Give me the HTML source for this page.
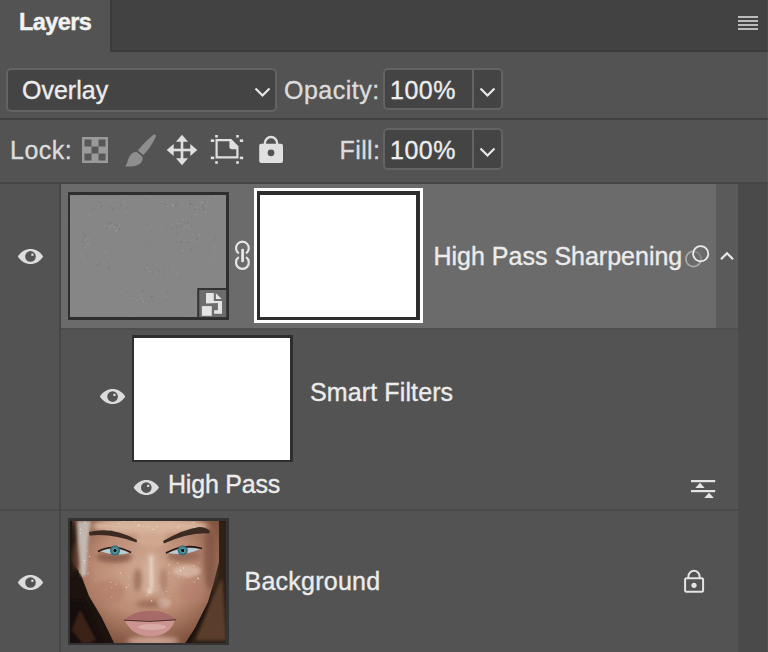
<!DOCTYPE html>
<html><head><meta charset="utf-8">
<style>
html,body{margin:0;padding:0;}
body{width:768px;height:652px;background:#535353;position:relative;overflow:hidden;font-family:"Liberation Sans",sans-serif;color:#ececec;}
.a{position:absolute;}
.t{position:absolute;font-size:25px;line-height:25px;white-space:nowrap;-webkit-text-stroke:0.35px currentColor;}
svg{position:absolute;left:0;top:0;}
</style></head><body>
<!-- header -->
<div class="a" style="left:110px;top:0;width:658px;height:52px;background:#424242;"></div>
<div class="a" style="left:110px;top:0;width:2px;height:52px;background:#3c3c3c;"></div>
<div class="a" style="left:110px;top:50px;width:658px;height:2px;background:#3c3c3c;"></div>
<div class="t" style="left:19px;top:10.8px;font-size:23.5px;line-height:23.5px;font-weight:bold;color:#f2f2f2;letter-spacing:-0.6px;-webkit-text-stroke:0.4px #f2f2f2;">Layers</div>

<!-- row 2: blend mode -->
<div class="a" style="left:6px;top:68px;width:267px;height:40px;border:2px solid #636363;border-radius:5px;background:#444444;"></div>
<div class="t" style="left:22px;top:78px;">Overlay</div>
<div class="t" style="left:284px;top:78px;color:#dcdcdc;letter-spacing:0.5px;">Opacity:</div>
<div class="a" style="left:383px;top:68px;width:115.5px;height:38px;border:2px solid #636363;border-radius:5px;background:#444444;"></div>
<div class="a" style="left:472px;top:70px;width:2px;height:38px;background:#636363;"></div>
<div class="t" style="left:390px;top:77.5px;letter-spacing:0.5px;">100%</div>
<div class="a" style="left:0;top:118px;width:768px;height:2px;background:#404040;"></div>

<!-- row 3: lock -->
<div class="t" style="left:10px;top:138px;color:#dcdcdc;letter-spacing:0.5px;">Lock:</div>
<div class="t" style="left:339.5px;top:138px;color:#dcdcdc;letter-spacing:0.4px;">Fill:</div>
<div class="a" style="left:383px;top:128px;width:115.5px;height:38px;border:2px solid #636363;border-radius:5px;background:#444444;"></div>
<div class="a" style="left:472px;top:130px;width:2px;height:38px;background:#636363;"></div>
<div class="t" style="left:390px;top:138px;letter-spacing:0.5px;">100%</div>
<div class="a" style="left:0;top:182px;width:768px;height:2px;background:#464646;"></div>

<!-- layer area -->
<div class="a" style="left:738px;top:184px;width:30px;height:468px;background:#4a4a4a;"></div>
<div class="a" style="left:59px;top:184px;width:2px;height:468px;background:#464646;"></div>
<!-- selected layer -->
<div class="a" style="left:61px;top:184px;width:655px;height:144px;background:#6b6b6b;"></div>
<div class="a" style="left:716px;top:184px;width:22px;height:144px;background:#5a5a5a;"></div>
<div class="a" style="left:61px;top:328px;width:677px;height:2px;background:#4e4e4e;"></div>
<!-- thumb 1 -->
<div class="a" style="left:68px;top:192px;width:156px;height:122px;border:3px solid #2e2e2e;border-left-width:2px;background:#868686;overflow:hidden;">
<svg width="156" height="122" viewBox="70 195 156 122" style="position:absolute;left:0;top:0;">
<g fill="none" stroke="#929292" stroke-width="0.8" opacity="0.35">
<path d="M81,250 L89,271 L102,293 L115,317"/><path d="M219,237 L213,260 L208,277 L195,303 L184,317"/>
<circle cx="115" cy="225.6" r="4.5"/><circle cx="182.7" cy="225.4" r="4.5"/>
</g>
<circle cx="113.3" cy="210.0" r="0.77" fill="#6e6e6e" opacity="0.54"/>
<circle cx="96.3" cy="205.4" r="0.50" fill="#747474" opacity="0.44"/>
<circle cx="126.9" cy="206.9" r="0.56" fill="#747474" opacity="0.69"/>
<circle cx="112.9" cy="208.4" r="0.70" fill="#747474" opacity="0.62"/>
<circle cx="132.5" cy="208.6" r="0.52" fill="#a8a8a8" opacity="0.36"/>
<circle cx="121.9" cy="205.0" r="0.69" fill="#747474" opacity="0.72"/>
<circle cx="93.3" cy="209.6" r="0.79" fill="#747474" opacity="0.40"/>
<circle cx="109.6" cy="207.5" r="0.49" fill="#747474" opacity="0.74"/>
<circle cx="94.9" cy="208.3" r="0.57" fill="#6e6e6e" opacity="0.68"/>
<circle cx="97.4" cy="205.7" r="0.63" fill="#747474" opacity="0.71"/>
<circle cx="99.4" cy="202.0" r="0.80" fill="#6e6e6e" opacity="0.62"/>
<circle cx="125.6" cy="211.1" r="0.69" fill="#a8a8a8" opacity="0.43"/>
<circle cx="120.5" cy="204.3" r="0.45" fill="#6e6e6e" opacity="0.54"/>
<circle cx="102.2" cy="204.9" r="0.72" fill="#6e6e6e" opacity="0.51"/>
<circle cx="118.4" cy="208.6" r="0.75" fill="#747474" opacity="0.37"/>
<circle cx="109.0" cy="206.5" r="0.62" fill="#6e6e6e" opacity="0.72"/>
<circle cx="110.2" cy="208.7" r="0.52" fill="#a8a8a8" opacity="0.38"/>
<circle cx="109.3" cy="206.6" r="0.79" fill="#a0a0a0" opacity="0.47"/>
<circle cx="110.3" cy="210.7" r="0.53" fill="#6e6e6e" opacity="0.73"/>
<circle cx="122.2" cy="205.6" r="0.75" fill="#747474" opacity="0.50"/>
<circle cx="125.4" cy="204.3" r="0.65" fill="#a8a8a8" opacity="0.73"/>
<circle cx="98.0" cy="206.9" r="0.77" fill="#a0a0a0" opacity="0.52"/>
<circle cx="111.4" cy="209.0" r="0.40" fill="#6e6e6e" opacity="0.52"/>
<circle cx="109.7" cy="206.8" r="0.42" fill="#a0a0a0" opacity="0.60"/>
<circle cx="92.5" cy="207.8" r="0.64" fill="#6e6e6e" opacity="0.46"/>
<circle cx="94.4" cy="207.2" r="0.79" fill="#a8a8a8" opacity="0.45"/>
<circle cx="95.0" cy="207.9" r="0.47" fill="#6e6e6e" opacity="0.42"/>
<circle cx="113.3" cy="202.4" r="0.52" fill="#6e6e6e" opacity="0.50"/>
<circle cx="112.4" cy="206.4" r="0.52" fill="#a0a0a0" opacity="0.44"/>
<circle cx="115.2" cy="205.3" r="0.67" fill="#a0a0a0" opacity="0.61"/>
<circle cx="126.7" cy="208.9" r="0.67" fill="#6e6e6e" opacity="0.44"/>
<circle cx="124.3" cy="201.3" r="0.53" fill="#a8a8a8" opacity="0.61"/>
<circle cx="122.8" cy="205.3" r="0.71" fill="#a0a0a0" opacity="0.36"/>
<circle cx="123.1" cy="206.4" r="0.75" fill="#a0a0a0" opacity="0.49"/>
<circle cx="114.6" cy="206.1" r="0.64" fill="#6e6e6e" opacity="0.52"/>
<circle cx="86.5" cy="206.5" r="0.54" fill="#747474" opacity="0.52"/>
<circle cx="100.1" cy="208.2" r="0.46" fill="#747474" opacity="0.35"/>
<circle cx="137.5" cy="205.3" r="0.62" fill="#747474" opacity="0.74"/>
<circle cx="111.3" cy="206.4" r="0.73" fill="#747474" opacity="0.62"/>
<circle cx="101.2" cy="206.8" r="0.76" fill="#6e6e6e" opacity="0.69"/>
<circle cx="208.0" cy="199.0" r="0.72" fill="#a8a8a8" opacity="0.37"/>
<circle cx="202.7" cy="201.9" r="0.76" fill="#a0a0a0" opacity="0.71"/>
<circle cx="184.1" cy="203.8" r="0.47" fill="#a8a8a8" opacity="0.47"/>
<circle cx="177.6" cy="201.5" r="0.42" fill="#747474" opacity="0.72"/>
<circle cx="191.2" cy="204.8" r="0.72" fill="#747474" opacity="0.37"/>
<circle cx="187.2" cy="205.2" r="0.47" fill="#a8a8a8" opacity="0.67"/>
<circle cx="207.1" cy="201.9" r="0.60" fill="#a8a8a8" opacity="0.58"/>
<circle cx="168.0" cy="206.4" r="0.51" fill="#a0a0a0" opacity="0.56"/>
<circle cx="172.8" cy="205.3" r="0.74" fill="#a8a8a8" opacity="0.66"/>
<circle cx="190.0" cy="204.2" r="0.79" fill="#747474" opacity="0.69"/>
<circle cx="199.4" cy="205.5" r="0.46" fill="#6e6e6e" opacity="0.38"/>
<circle cx="176.1" cy="205.6" r="0.54" fill="#6e6e6e" opacity="0.43"/>
<circle cx="182.8" cy="205.1" r="0.69" fill="#a8a8a8" opacity="0.50"/>
<circle cx="193.3" cy="204.7" r="0.58" fill="#6e6e6e" opacity="0.61"/>
<circle cx="167.8" cy="203.1" r="0.65" fill="#a8a8a8" opacity="0.52"/>
<circle cx="175.2" cy="206.0" r="0.57" fill="#6e6e6e" opacity="0.63"/>
<circle cx="176.4" cy="204.4" r="0.68" fill="#6e6e6e" opacity="0.38"/>
<circle cx="173.6" cy="205.1" r="0.77" fill="#a8a8a8" opacity="0.50"/>
<circle cx="204.7" cy="201.5" r="0.45" fill="#6e6e6e" opacity="0.63"/>
<circle cx="205.9" cy="202.5" r="0.67" fill="#747474" opacity="0.64"/>
<circle cx="180.3" cy="203.6" r="0.59" fill="#a8a8a8" opacity="0.44"/>
<circle cx="173.6" cy="205.9" r="0.66" fill="#a8a8a8" opacity="0.50"/>
<circle cx="191.1" cy="202.0" r="0.41" fill="#a8a8a8" opacity="0.40"/>
<circle cx="165.8" cy="204.4" r="0.63" fill="#6e6e6e" opacity="0.67"/>
<circle cx="208.0" cy="204.9" r="0.44" fill="#a0a0a0" opacity="0.65"/>
<circle cx="190.3" cy="203.7" r="0.75" fill="#6e6e6e" opacity="0.42"/>
<circle cx="177.2" cy="201.9" r="0.50" fill="#747474" opacity="0.59"/>
<circle cx="201.6" cy="202.9" r="0.55" fill="#a8a8a8" opacity="0.44"/>
<circle cx="209.0" cy="202.0" r="0.57" fill="#a0a0a0" opacity="0.58"/>
<circle cx="159.7" cy="201.4" r="0.46" fill="#747474" opacity="0.51"/>
<circle cx="192.0" cy="203.1" r="0.70" fill="#747474" opacity="0.72"/>
<circle cx="171.8" cy="203.7" r="0.45" fill="#a0a0a0" opacity="0.65"/>
<circle cx="195.6" cy="206.3" r="0.74" fill="#a0a0a0" opacity="0.57"/>
<circle cx="189.6" cy="200.5" r="0.64" fill="#747474" opacity="0.58"/>
<circle cx="213.6" cy="203.5" r="0.41" fill="#6e6e6e" opacity="0.54"/>
<circle cx="180.0" cy="205.0" r="0.50" fill="#6e6e6e" opacity="0.54"/>
<circle cx="195.0" cy="202.1" r="0.68" fill="#747474" opacity="0.43"/>
<circle cx="161.1" cy="201.5" r="0.59" fill="#a8a8a8" opacity="0.64"/>
<circle cx="194.3" cy="202.1" r="0.59" fill="#a8a8a8" opacity="0.44"/>
<circle cx="116.3" cy="230.7" r="0.78" fill="#a8a8a8" opacity="0.69"/>
<circle cx="115.3" cy="227.9" r="0.45" fill="#6e6e6e" opacity="0.60"/>
<circle cx="114.0" cy="225.3" r="0.47" fill="#6e6e6e" opacity="0.37"/>
<circle cx="116.5" cy="227.2" r="0.45" fill="#a8a8a8" opacity="0.46"/>
<circle cx="117.0" cy="225.6" r="0.63" fill="#747474" opacity="0.62"/>
<circle cx="122.6" cy="226.1" r="0.55" fill="#747474" opacity="0.38"/>
<circle cx="106.5" cy="222.1" r="0.56" fill="#747474" opacity="0.57"/>
<circle cx="119.9" cy="227.6" r="0.45" fill="#747474" opacity="0.70"/>
<circle cx="118.2" cy="225.3" r="0.67" fill="#6e6e6e" opacity="0.50"/>
<circle cx="103.2" cy="227.4" r="0.44" fill="#6e6e6e" opacity="0.73"/>
<circle cx="109.3" cy="229.3" r="0.67" fill="#a8a8a8" opacity="0.55"/>
<circle cx="121.5" cy="226.9" r="0.66" fill="#a0a0a0" opacity="0.64"/>
<circle cx="119.8" cy="228.3" r="0.45" fill="#747474" opacity="0.72"/>
<circle cx="119.8" cy="228.1" r="0.62" fill="#747474" opacity="0.61"/>
<circle cx="108.0" cy="226.7" r="0.68" fill="#a0a0a0" opacity="0.39"/>
<circle cx="119.5" cy="229.5" r="0.54" fill="#747474" opacity="0.46"/>
<circle cx="102.3" cy="230.1" r="0.59" fill="#a8a8a8" opacity="0.46"/>
<circle cx="111.6" cy="222.6" r="0.78" fill="#6e6e6e" opacity="0.53"/>
<circle cx="116.2" cy="224.9" r="0.74" fill="#747474" opacity="0.39"/>
<circle cx="114.5" cy="227.4" r="0.63" fill="#a8a8a8" opacity="0.71"/>
<circle cx="124.9" cy="229.0" r="0.67" fill="#747474" opacity="0.51"/>
<circle cx="119.4" cy="225.8" r="0.74" fill="#a0a0a0" opacity="0.67"/>
<circle cx="110.1" cy="225.5" r="0.48" fill="#a0a0a0" opacity="0.45"/>
<circle cx="115.4" cy="225.3" r="0.76" fill="#747474" opacity="0.73"/>
<circle cx="107.1" cy="228.5" r="0.65" fill="#6e6e6e" opacity="0.74"/>
<circle cx="112.3" cy="223.7" r="0.41" fill="#747474" opacity="0.43"/>
<circle cx="112.3" cy="224.9" r="0.60" fill="#a0a0a0" opacity="0.56"/>
<circle cx="109.7" cy="226.5" r="0.41" fill="#a0a0a0" opacity="0.55"/>
<circle cx="109.5" cy="223.4" r="0.78" fill="#6e6e6e" opacity="0.71"/>
<circle cx="124.8" cy="230.0" r="0.41" fill="#a8a8a8" opacity="0.60"/>
<circle cx="105.1" cy="225.9" r="0.77" fill="#a8a8a8" opacity="0.48"/>
<circle cx="123.9" cy="222.6" r="0.43" fill="#a0a0a0" opacity="0.69"/>
<circle cx="115.4" cy="225.2" r="0.70" fill="#a8a8a8" opacity="0.49"/>
<circle cx="121.8" cy="219.5" r="0.57" fill="#a0a0a0" opacity="0.65"/>
<circle cx="111.0" cy="226.1" r="0.56" fill="#a8a8a8" opacity="0.69"/>
<circle cx="180.7" cy="222.1" r="0.68" fill="#747474" opacity="0.56"/>
<circle cx="172.3" cy="227.0" r="0.41" fill="#6e6e6e" opacity="0.53"/>
<circle cx="179.7" cy="222.0" r="0.76" fill="#747474" opacity="0.64"/>
<circle cx="177.6" cy="227.1" r="0.64" fill="#6e6e6e" opacity="0.44"/>
<circle cx="188.8" cy="225.0" r="0.46" fill="#6e6e6e" opacity="0.53"/>
<circle cx="184.9" cy="226.9" r="0.63" fill="#a0a0a0" opacity="0.55"/>
<circle cx="180.0" cy="223.8" r="0.58" fill="#a0a0a0" opacity="0.42"/>
<circle cx="187.6" cy="222.4" r="0.56" fill="#6e6e6e" opacity="0.63"/>
<circle cx="191.1" cy="226.0" r="0.60" fill="#747474" opacity="0.71"/>
<circle cx="187.6" cy="223.5" r="0.59" fill="#747474" opacity="0.42"/>
<circle cx="177.4" cy="223.1" r="0.64" fill="#a8a8a8" opacity="0.67"/>
<circle cx="177.0" cy="233.2" r="0.72" fill="#747474" opacity="0.73"/>
<circle cx="172.2" cy="225.3" r="0.73" fill="#a8a8a8" opacity="0.60"/>
<circle cx="180.9" cy="226.1" r="0.79" fill="#747474" opacity="0.59"/>
<circle cx="185.1" cy="225.0" r="0.41" fill="#a8a8a8" opacity="0.55"/>
<circle cx="177.6" cy="225.2" r="0.48" fill="#6e6e6e" opacity="0.74"/>
<circle cx="168.0" cy="225.8" r="0.78" fill="#6e6e6e" opacity="0.36"/>
<circle cx="179.1" cy="228.9" r="0.44" fill="#747474" opacity="0.47"/>
<circle cx="185.4" cy="223.8" r="0.62" fill="#747474" opacity="0.56"/>
<circle cx="184.5" cy="222.0" r="0.73" fill="#747474" opacity="0.57"/>
<circle cx="190.1" cy="223.7" r="0.58" fill="#747474" opacity="0.53"/>
<circle cx="180.7" cy="222.4" r="0.60" fill="#a0a0a0" opacity="0.65"/>
<circle cx="194.2" cy="222.6" r="0.42" fill="#747474" opacity="0.42"/>
<circle cx="183.2" cy="219.4" r="0.70" fill="#a8a8a8" opacity="0.62"/>
<circle cx="188.1" cy="226.3" r="0.75" fill="#a8a8a8" opacity="0.70"/>
<circle cx="166.0" cy="227.0" r="0.80" fill="#6e6e6e" opacity="0.35"/>
<circle cx="188.0" cy="230.0" r="0.54" fill="#a8a8a8" opacity="0.47"/>
<circle cx="168.1" cy="226.7" r="0.50" fill="#a0a0a0" opacity="0.37"/>
<circle cx="189.9" cy="228.5" r="0.44" fill="#a8a8a8" opacity="0.47"/>
<circle cx="187.2" cy="230.7" r="0.60" fill="#747474" opacity="0.71"/>
<circle cx="175.7" cy="230.6" r="0.59" fill="#a0a0a0" opacity="0.60"/>
<circle cx="197.7" cy="226.4" r="0.74" fill="#a8a8a8" opacity="0.39"/>
<circle cx="189.0" cy="224.2" r="0.59" fill="#a8a8a8" opacity="0.44"/>
<circle cx="188.6" cy="221.4" r="0.70" fill="#747474" opacity="0.70"/>
<circle cx="176.5" cy="228.4" r="0.71" fill="#747474" opacity="0.47"/>
<circle cx="154.9" cy="225.6" r="0.48" fill="#747474" opacity="0.57"/>
<circle cx="142.4" cy="234.3" r="0.54" fill="#a8a8a8" opacity="0.43"/>
<circle cx="150.2" cy="202.8" r="0.57" fill="#6e6e6e" opacity="0.61"/>
<circle cx="147.4" cy="224.9" r="0.74" fill="#6e6e6e" opacity="0.37"/>
<circle cx="150.4" cy="242.9" r="0.49" fill="#6e6e6e" opacity="0.42"/>
<circle cx="157.0" cy="221.9" r="0.77" fill="#747474" opacity="0.56"/>
<circle cx="139.8" cy="244.3" r="0.59" fill="#747474" opacity="0.66"/>
<circle cx="136.2" cy="252.8" r="0.52" fill="#a8a8a8" opacity="0.72"/>
<circle cx="150.9" cy="234.9" r="0.52" fill="#a0a0a0" opacity="0.56"/>
<circle cx="149.1" cy="227.3" r="0.51" fill="#a0a0a0" opacity="0.52"/>
<circle cx="145.6" cy="246.4" r="0.46" fill="#6e6e6e" opacity="0.53"/>
<circle cx="154.4" cy="222.9" r="0.46" fill="#a0a0a0" opacity="0.66"/>
<circle cx="146.0" cy="198.7" r="0.78" fill="#6e6e6e" opacity="0.52"/>
<circle cx="155.1" cy="225.0" r="0.54" fill="#a0a0a0" opacity="0.69"/>
<circle cx="148.8" cy="243.1" r="0.72" fill="#6e6e6e" opacity="0.47"/>
<circle cx="150.4" cy="251.7" r="0.41" fill="#a8a8a8" opacity="0.60"/>
<circle cx="150.6" cy="232.0" r="0.40" fill="#a8a8a8" opacity="0.74"/>
<circle cx="151.2" cy="219.2" r="0.79" fill="#6e6e6e" opacity="0.36"/>
<circle cx="150.3" cy="231.8" r="0.76" fill="#747474" opacity="0.68"/>
<circle cx="143.0" cy="216.7" r="0.52" fill="#747474" opacity="0.45"/>
<circle cx="152.8" cy="265.3" r="0.54" fill="#6e6e6e" opacity="0.36"/>
<circle cx="177.1" cy="273.7" r="0.77" fill="#a0a0a0" opacity="0.67"/>
<circle cx="150.1" cy="272.6" r="0.60" fill="#747474" opacity="0.68"/>
<circle cx="143.6" cy="268.8" r="0.42" fill="#a0a0a0" opacity="0.54"/>
<circle cx="164.4" cy="273.3" r="0.59" fill="#747474" opacity="0.62"/>
<circle cx="163.9" cy="266.2" r="0.55" fill="#747474" opacity="0.60"/>
<circle cx="149.1" cy="271.8" r="0.80" fill="#a0a0a0" opacity="0.57"/>
<circle cx="143.4" cy="272.4" r="0.51" fill="#747474" opacity="0.45"/>
<circle cx="147.9" cy="275.8" r="0.46" fill="#6e6e6e" opacity="0.37"/>
<circle cx="143.9" cy="270.3" r="0.77" fill="#747474" opacity="0.59"/>
<circle cx="160.8" cy="271.2" r="0.60" fill="#a8a8a8" opacity="0.46"/>
<circle cx="145.3" cy="259.8" r="0.57" fill="#a8a8a8" opacity="0.38"/>
<circle cx="159.5" cy="271.2" r="0.48" fill="#747474" opacity="0.72"/>
<circle cx="153.5" cy="274.3" r="0.53" fill="#747474" opacity="0.46"/>
<circle cx="169.2" cy="266.4" r="0.64" fill="#6e6e6e" opacity="0.57"/>
<circle cx="158.5" cy="271.1" r="0.79" fill="#747474" opacity="0.38"/>
<circle cx="150.7" cy="273.2" r="0.68" fill="#a8a8a8" opacity="0.40"/>
<circle cx="147.1" cy="268.2" r="0.78" fill="#a8a8a8" opacity="0.74"/>
<circle cx="146.8" cy="265.2" r="0.58" fill="#747474" opacity="0.47"/>
<circle cx="145.2" cy="268.9" r="0.78" fill="#747474" opacity="0.41"/>
<circle cx="154.4" cy="268.3" r="0.67" fill="#747474" opacity="0.61"/>
<circle cx="151.8" cy="271.3" r="0.52" fill="#a0a0a0" opacity="0.61"/>
<circle cx="153.2" cy="272.0" r="0.61" fill="#a0a0a0" opacity="0.50"/>
<circle cx="156.5" cy="273.0" r="0.51" fill="#a8a8a8" opacity="0.40"/>
<circle cx="152.7" cy="272.0" r="0.78" fill="#6e6e6e" opacity="0.59"/>
<circle cx="151.6" cy="296.8" r="0.80" fill="#6e6e6e" opacity="0.74"/>
<circle cx="150.3" cy="300.4" r="0.44" fill="#747474" opacity="0.69"/>
<circle cx="126.7" cy="298.0" r="0.63" fill="#747474" opacity="0.54"/>
<circle cx="134.9" cy="296.1" r="0.73" fill="#747474" opacity="0.43"/>
<circle cx="122.2" cy="292.3" r="0.52" fill="#a0a0a0" opacity="0.69"/>
<circle cx="162.2" cy="296.2" r="0.45" fill="#a0a0a0" opacity="0.59"/>
<circle cx="168.6" cy="298.7" r="0.45" fill="#a0a0a0" opacity="0.36"/>
<circle cx="167.5" cy="292.3" r="0.61" fill="#6e6e6e" opacity="0.66"/>
<circle cx="165.0" cy="299.5" r="0.53" fill="#747474" opacity="0.59"/>
<circle cx="153.1" cy="300.9" r="0.65" fill="#6e6e6e" opacity="0.59"/>
<circle cx="142.7" cy="291.1" r="0.74" fill="#6e6e6e" opacity="0.68"/>
<circle cx="141.0" cy="306.6" r="0.47" fill="#6e6e6e" opacity="0.59"/>
<circle cx="158.5" cy="308.6" r="0.51" fill="#a0a0a0" opacity="0.74"/>
<circle cx="134.3" cy="298.2" r="0.79" fill="#a0a0a0" opacity="0.56"/>
<circle cx="131.4" cy="298.8" r="0.57" fill="#a8a8a8" opacity="0.57"/>
<circle cx="140.8" cy="295.1" r="0.74" fill="#a0a0a0" opacity="0.50"/>
<circle cx="163.7" cy="296.6" r="0.42" fill="#a0a0a0" opacity="0.55"/>
<circle cx="167.3" cy="300.9" r="0.68" fill="#747474" opacity="0.49"/>
<circle cx="144.7" cy="301.1" r="0.58" fill="#747474" opacity="0.71"/>
<circle cx="147.3" cy="295.4" r="0.46" fill="#747474" opacity="0.44"/>
<circle cx="136.3" cy="300.6" r="0.75" fill="#a0a0a0" opacity="0.43"/>
<circle cx="141.2" cy="297.9" r="0.62" fill="#a8a8a8" opacity="0.72"/>
<circle cx="127.0" cy="295.7" r="0.58" fill="#a0a0a0" opacity="0.62"/>
<circle cx="171.5" cy="302.1" r="0.49" fill="#747474" opacity="0.41"/>
<circle cx="143.6" cy="301.3" r="0.73" fill="#a8a8a8" opacity="0.59"/>
<circle cx="153.0" cy="297.4" r="0.55" fill="#6e6e6e" opacity="0.55"/>
<circle cx="166.2" cy="296.6" r="0.56" fill="#a0a0a0" opacity="0.55"/>
<circle cx="131.5" cy="299.1" r="0.57" fill="#6e6e6e" opacity="0.39"/>
<circle cx="171.9" cy="296.3" r="0.43" fill="#a8a8a8" opacity="0.70"/>
<circle cx="149.7" cy="293.8" r="0.53" fill="#a8a8a8" opacity="0.72"/>
<circle cx="187.5" cy="243.4" r="0.66" fill="#6e6e6e" opacity="0.70"/>
<circle cx="191.1" cy="249.2" r="0.78" fill="#747474" opacity="0.37"/>
<circle cx="172.0" cy="243.8" r="0.63" fill="#a0a0a0" opacity="0.38"/>
<circle cx="191.1" cy="250.4" r="0.51" fill="#747474" opacity="0.74"/>
<circle cx="184.6" cy="240.0" r="0.63" fill="#a0a0a0" opacity="0.49"/>
<circle cx="180.6" cy="241.7" r="0.65" fill="#6e6e6e" opacity="0.49"/>
<circle cx="192.2" cy="234.5" r="0.58" fill="#a0a0a0" opacity="0.64"/>
<circle cx="197.4" cy="239.7" r="0.75" fill="#747474" opacity="0.44"/>
<circle cx="198.7" cy="234.9" r="0.77" fill="#a8a8a8" opacity="0.55"/>
<circle cx="194.0" cy="241.5" r="0.53" fill="#a8a8a8" opacity="0.45"/>
<circle cx="199.3" cy="240.0" r="0.49" fill="#a8a8a8" opacity="0.50"/>
<circle cx="191.1" cy="248.9" r="0.51" fill="#6e6e6e" opacity="0.63"/>
<circle cx="187.8" cy="247.0" r="0.52" fill="#a0a0a0" opacity="0.42"/>
<circle cx="194.7" cy="249.8" r="0.49" fill="#a0a0a0" opacity="0.62"/>
<circle cx="186.0" cy="243.1" r="0.64" fill="#747474" opacity="0.52"/>
<circle cx="193.1" cy="248.7" r="0.42" fill="#6e6e6e" opacity="0.66"/>
<circle cx="196.2" cy="240.7" r="0.51" fill="#a0a0a0" opacity="0.71"/>
<circle cx="187.7" cy="241.9" r="0.54" fill="#747474" opacity="0.75"/>
<circle cx="184.8" cy="245.3" r="0.54" fill="#747474" opacity="0.64"/>
<circle cx="186.5" cy="243.9" r="0.74" fill="#a0a0a0" opacity="0.54"/>
<circle cx="173.8" cy="242.7" r="0.55" fill="#747474" opacity="0.37"/>
<circle cx="183.2" cy="250.6" r="0.68" fill="#a8a8a8" opacity="0.74"/>
<circle cx="180.7" cy="241.5" r="0.62" fill="#6e6e6e" opacity="0.75"/>
<circle cx="197.2" cy="238.2" r="0.77" fill="#6e6e6e" opacity="0.52"/>
<circle cx="176.7" cy="242.1" r="0.59" fill="#747474" opacity="0.58"/>
<circle cx="110.0" cy="271.3" r="0.69" fill="#747474" opacity="0.48"/>
<circle cx="121.2" cy="273.3" r="0.47" fill="#747474" opacity="0.51"/>
<circle cx="113.3" cy="267.8" r="0.44" fill="#6e6e6e" opacity="0.37"/>
<circle cx="103.6" cy="262.4" r="0.45" fill="#a0a0a0" opacity="0.57"/>
<circle cx="117.0" cy="266.0" r="0.56" fill="#6e6e6e" opacity="0.38"/>
<circle cx="108.6" cy="267.1" r="0.45" fill="#6e6e6e" opacity="0.73"/>
<circle cx="99.9" cy="262.9" r="0.55" fill="#6e6e6e" opacity="0.62"/>
<circle cx="108.5" cy="272.4" r="0.67" fill="#a0a0a0" opacity="0.45"/>
<circle cx="109.5" cy="267.5" r="0.76" fill="#6e6e6e" opacity="0.39"/>
<circle cx="105.4" cy="252.4" r="0.79" fill="#a0a0a0" opacity="0.48"/>
<circle cx="123.5" cy="269.4" r="0.47" fill="#a0a0a0" opacity="0.62"/>
<circle cx="108.6" cy="269.1" r="0.76" fill="#6e6e6e" opacity="0.53"/>
<circle cx="98.8" cy="265.4" r="0.79" fill="#747474" opacity="0.52"/>
<circle cx="107.8" cy="266.6" r="0.46" fill="#747474" opacity="0.36"/>
<circle cx="109.5" cy="262.1" r="0.60" fill="#a0a0a0" opacity="0.73"/>
<circle cx="118.9" cy="254.1" r="0.50" fill="#6e6e6e" opacity="0.60"/>
<circle cx="87.1" cy="255.9" r="0.48" fill="#6e6e6e" opacity="0.41"/>
<circle cx="125.6" cy="260.8" r="0.57" fill="#747474" opacity="0.47"/>
<circle cx="116.5" cy="265.6" r="0.50" fill="#a0a0a0" opacity="0.38"/>
<circle cx="122.7" cy="266.4" r="0.40" fill="#a8a8a8" opacity="0.38"/>
<circle cx="112.1" cy="256.2" r="0.62" fill="#747474" opacity="0.62"/>
<circle cx="104.4" cy="263.3" r="0.43" fill="#a8a8a8" opacity="0.62"/>
<circle cx="109.0" cy="262.4" r="0.61" fill="#6e6e6e" opacity="0.48"/>
<circle cx="114.4" cy="261.5" r="0.56" fill="#a0a0a0" opacity="0.67"/>
<circle cx="96.6" cy="265.0" r="0.65" fill="#6e6e6e" opacity="0.53"/>
<circle cx="86.0" cy="236.9" r="0.49" fill="#a0a0a0" opacity="0.52"/>
<circle cx="87.7" cy="243.9" r="0.62" fill="#a8a8a8" opacity="0.59"/>
<circle cx="85.9" cy="238.9" r="0.64" fill="#a8a8a8" opacity="0.44"/>
<circle cx="83.2" cy="241.1" r="0.66" fill="#747474" opacity="0.64"/>
<circle cx="83.5" cy="232.4" r="0.72" fill="#6e6e6e" opacity="0.42"/>
<circle cx="83.2" cy="241.6" r="0.77" fill="#6e6e6e" opacity="0.58"/>
<circle cx="84.2" cy="221.4" r="0.52" fill="#a0a0a0" opacity="0.56"/>
<circle cx="86.4" cy="256.7" r="0.45" fill="#6e6e6e" opacity="0.55"/>
<circle cx="84.2" cy="236.7" r="0.41" fill="#747474" opacity="0.36"/>
<circle cx="85.4" cy="230.7" r="0.76" fill="#747474" opacity="0.37"/>
<circle cx="85.1" cy="221.3" r="0.60" fill="#747474" opacity="0.66"/>
<circle cx="86.7" cy="220.3" r="0.56" fill="#a8a8a8" opacity="0.61"/>
<circle cx="88.7" cy="252.8" r="0.43" fill="#a0a0a0" opacity="0.65"/>
<circle cx="82.0" cy="229.1" r="0.65" fill="#a0a0a0" opacity="0.38"/>
<circle cx="84.7" cy="215.8" r="0.60" fill="#a8a8a8" opacity="0.49"/>
<circle cx="85.0" cy="235.0" r="0.62" fill="#6e6e6e" opacity="0.51"/>
<circle cx="82.8" cy="240.3" r="0.53" fill="#a8a8a8" opacity="0.54"/>
<circle cx="83.2" cy="211.2" r="0.48" fill="#6e6e6e" opacity="0.39"/>
<circle cx="85.8" cy="255.5" r="0.59" fill="#747474" opacity="0.43"/>
<circle cx="85.6" cy="240.3" r="0.80" fill="#a0a0a0" opacity="0.37"/>
<circle cx="84.1" cy="245.3" r="0.44" fill="#6e6e6e" opacity="0.42"/>
<circle cx="84.2" cy="234.9" r="0.63" fill="#747474" opacity="0.49"/>
<circle cx="85.4" cy="237.2" r="0.55" fill="#747474" opacity="0.64"/>
<circle cx="85.8" cy="247.5" r="0.75" fill="#a0a0a0" opacity="0.66"/>
<circle cx="88.4" cy="238.6" r="0.64" fill="#a8a8a8" opacity="0.51"/>
<circle cx="83.2" cy="237.9" r="0.65" fill="#747474" opacity="0.54"/>
<circle cx="88.9" cy="243.3" r="0.77" fill="#a0a0a0" opacity="0.43"/>
<circle cx="89.3" cy="214.6" r="0.79" fill="#a8a8a8" opacity="0.41"/>
<circle cx="86.9" cy="197.0" r="0.44" fill="#a8a8a8" opacity="0.44"/>
<circle cx="88.6" cy="223.9" r="0.76" fill="#a0a0a0" opacity="0.52"/>
<circle cx="215.8" cy="239.9" r="0.60" fill="#747474" opacity="0.60"/>
<circle cx="214.6" cy="229.6" r="0.64" fill="#a8a8a8" opacity="0.49"/>
<circle cx="213.8" cy="226.0" r="0.51" fill="#a8a8a8" opacity="0.38"/>
<circle cx="216.0" cy="221.3" r="0.75" fill="#a0a0a0" opacity="0.48"/>
<circle cx="214.9" cy="222.1" r="0.71" fill="#6e6e6e" opacity="0.68"/>
<circle cx="215.8" cy="258.1" r="0.60" fill="#a8a8a8" opacity="0.47"/>
<circle cx="215.1" cy="196.7" r="0.72" fill="#a8a8a8" opacity="0.49"/>
<circle cx="214.6" cy="246.0" r="0.76" fill="#a0a0a0" opacity="0.72"/>
<circle cx="214.2" cy="226.8" r="0.50" fill="#747474" opacity="0.56"/>
<circle cx="213.1" cy="244.5" r="0.58" fill="#a0a0a0" opacity="0.43"/>
<circle cx="214.5" cy="236.3" r="0.76" fill="#747474" opacity="0.51"/>
<circle cx="213.5" cy="251.7" r="0.50" fill="#a0a0a0" opacity="0.40"/>
<circle cx="214.6" cy="228.2" r="0.54" fill="#6e6e6e" opacity="0.42"/>
<circle cx="214.6" cy="237.8" r="0.64" fill="#6e6e6e" opacity="0.38"/>
<circle cx="205.9" cy="206.2" r="0.59" fill="#a8a8a8" opacity="0.66"/>
<circle cx="190.5" cy="213.1" r="0.40" fill="#747474" opacity="0.66"/>
<circle cx="192.0" cy="216.9" r="0.55" fill="#6e6e6e" opacity="0.56"/>
<circle cx="203.3" cy="206.2" r="0.68" fill="#6e6e6e" opacity="0.64"/>
<circle cx="204.9" cy="208.3" r="0.61" fill="#747474" opacity="0.35"/>
<circle cx="204.6" cy="211.8" r="0.79" fill="#a0a0a0" opacity="0.40"/>
<circle cx="202.5" cy="207.8" r="0.53" fill="#6e6e6e" opacity="0.50"/>
<circle cx="204.2" cy="210.1" r="0.75" fill="#6e6e6e" opacity="0.74"/>
<circle cx="205.5" cy="211.5" r="0.66" fill="#a8a8a8" opacity="0.55"/>
<circle cx="196.0" cy="214.5" r="0.80" fill="#a8a8a8" opacity="0.62"/>
<circle cx="205.4" cy="205.7" r="0.44" fill="#a8a8a8" opacity="0.66"/>
<circle cx="198.0" cy="207.2" r="0.51" fill="#a8a8a8" opacity="0.61"/>
<circle cx="204.1" cy="210.6" r="0.42" fill="#747474" opacity="0.55"/>
<circle cx="203.9" cy="208.7" r="0.70" fill="#747474" opacity="0.60"/>
<circle cx="201.0" cy="202.6" r="0.74" fill="#a8a8a8" opacity="0.63"/>
<circle cx="199.4" cy="209.3" r="0.45" fill="#747474" opacity="0.69"/>
<circle cx="193.1" cy="212.0" r="0.45" fill="#747474" opacity="0.64"/>
<circle cx="203.7" cy="201.0" r="0.43" fill="#6e6e6e" opacity="0.65"/>
<circle cx="194.8" cy="208.8" r="0.50" fill="#747474" opacity="0.71"/>
<circle cx="195.1" cy="209.1" r="0.71" fill="#6e6e6e" opacity="0.66"/>
<circle cx="116.2" cy="204.0" r="0.45" fill="#787878" opacity="0.4"/>
<circle cx="183.8" cy="267.5" r="0.45" fill="#787878" opacity="0.4"/>
<circle cx="220.6" cy="257.2" r="0.45" fill="#9a9a9a" opacity="0.4"/>
<circle cx="213.7" cy="271.4" r="0.45" fill="#9a9a9a" opacity="0.4"/>
<circle cx="163.7" cy="239.5" r="0.45" fill="#9a9a9a" opacity="0.4"/>
<circle cx="171.4" cy="250.9" r="0.45" fill="#787878" opacity="0.4"/>
<circle cx="166.3" cy="255.4" r="0.45" fill="#787878" opacity="0.4"/>
<circle cx="191.2" cy="285.5" r="0.45" fill="#787878" opacity="0.4"/>
<circle cx="83.6" cy="279.3" r="0.45" fill="#787878" opacity="0.4"/>
<circle cx="192.1" cy="243.3" r="0.45" fill="#9a9a9a" opacity="0.4"/>
<circle cx="101.6" cy="227.0" r="0.45" fill="#9a9a9a" opacity="0.4"/>
<circle cx="219.7" cy="305.7" r="0.45" fill="#787878" opacity="0.4"/>
<circle cx="70.1" cy="216.7" r="0.45" fill="#9a9a9a" opacity="0.4"/>
<circle cx="167.5" cy="224.0" r="0.45" fill="#9a9a9a" opacity="0.4"/>
<circle cx="115.2" cy="275.5" r="0.45" fill="#9a9a9a" opacity="0.4"/>
<circle cx="70.2" cy="248.6" r="0.45" fill="#787878" opacity="0.4"/>
<circle cx="163.4" cy="306.3" r="0.45" fill="#787878" opacity="0.4"/>
<circle cx="192.1" cy="216.8" r="0.45" fill="#787878" opacity="0.4"/>
<circle cx="161.2" cy="255.6" r="0.45" fill="#787878" opacity="0.4"/>
<circle cx="123.5" cy="202.9" r="0.45" fill="#9a9a9a" opacity="0.4"/>
<circle cx="126.7" cy="260.5" r="0.45" fill="#787878" opacity="0.4"/>
<circle cx="198.2" cy="216.8" r="0.45" fill="#787878" opacity="0.4"/>
<circle cx="94.6" cy="206.5" r="0.45" fill="#787878" opacity="0.4"/>
<circle cx="160.6" cy="224.1" r="0.45" fill="#9a9a9a" opacity="0.4"/>
<circle cx="71.8" cy="261.5" r="0.45" fill="#787878" opacity="0.4"/>
<circle cx="92.1" cy="229.9" r="0.45" fill="#9a9a9a" opacity="0.4"/>
<circle cx="124.5" cy="290.7" r="0.45" fill="#787878" opacity="0.4"/>
<circle cx="160.4" cy="213.2" r="0.45" fill="#787878" opacity="0.4"/>
<circle cx="174.5" cy="244.4" r="0.45" fill="#787878" opacity="0.4"/>
<circle cx="213.7" cy="297.6" r="0.45" fill="#9a9a9a" opacity="0.4"/>
<circle cx="222.1" cy="227.6" r="0.45" fill="#787878" opacity="0.4"/>
<circle cx="126.9" cy="196.0" r="0.45" fill="#9a9a9a" opacity="0.4"/>
<circle cx="133.5" cy="200.4" r="0.45" fill="#787878" opacity="0.4"/>
<circle cx="188.5" cy="278.8" r="0.45" fill="#787878" opacity="0.4"/>
<circle cx="76.6" cy="227.4" r="0.45" fill="#787878" opacity="0.4"/>
<circle cx="98.7" cy="305.7" r="0.45" fill="#787878" opacity="0.4"/>
<circle cx="207.2" cy="285.3" r="0.45" fill="#9a9a9a" opacity="0.4"/>
<circle cx="178.6" cy="238.5" r="0.45" fill="#9a9a9a" opacity="0.4"/>
<circle cx="186.8" cy="294.4" r="0.45" fill="#787878" opacity="0.4"/>
<circle cx="178.3" cy="230.1" r="0.45" fill="#9a9a9a" opacity="0.4"/>
<circle cx="105.6" cy="302.7" r="0.45" fill="#9a9a9a" opacity="0.4"/>
<circle cx="108.2" cy="214.2" r="0.45" fill="#787878" opacity="0.4"/>
<circle cx="100.4" cy="264.6" r="0.45" fill="#787878" opacity="0.4"/>
<circle cx="222.8" cy="287.6" r="0.45" fill="#787878" opacity="0.4"/>
<circle cx="207.9" cy="215.2" r="0.45" fill="#787878" opacity="0.4"/>
<circle cx="200.0" cy="315.9" r="0.45" fill="#787878" opacity="0.4"/>
<circle cx="84.4" cy="241.1" r="0.45" fill="#9a9a9a" opacity="0.4"/>
<circle cx="102.9" cy="287.4" r="0.45" fill="#787878" opacity="0.4"/>
<circle cx="198.8" cy="238.5" r="0.45" fill="#787878" opacity="0.4"/>
<circle cx="201.1" cy="280.3" r="0.45" fill="#787878" opacity="0.4"/>
<circle cx="170.7" cy="289.4" r="0.45" fill="#9a9a9a" opacity="0.4"/>
<circle cx="170.3" cy="258.0" r="0.45" fill="#787878" opacity="0.4"/>
<circle cx="223.8" cy="234.3" r="0.45" fill="#787878" opacity="0.4"/>
<circle cx="183.5" cy="218.6" r="0.45" fill="#787878" opacity="0.4"/>
<circle cx="171.8" cy="221.0" r="0.45" fill="#9a9a9a" opacity="0.4"/>
<circle cx="151.6" cy="240.5" r="0.45" fill="#787878" opacity="0.4"/>
<circle cx="140.0" cy="274.2" r="0.45" fill="#9a9a9a" opacity="0.4"/>
<circle cx="223.3" cy="208.6" r="0.45" fill="#9a9a9a" opacity="0.4"/>
<circle cx="172.5" cy="265.7" r="0.45" fill="#9a9a9a" opacity="0.4"/>
<circle cx="218.9" cy="296.0" r="0.45" fill="#787878" opacity="0.4"/>
<circle cx="118.6" cy="238.5" r="0.45" fill="#9a9a9a" opacity="0.4"/>
<circle cx="110.2" cy="308.7" r="0.45" fill="#787878" opacity="0.4"/>
<circle cx="190.0" cy="277.1" r="0.45" fill="#787878" opacity="0.4"/>
<circle cx="151.7" cy="214.7" r="0.45" fill="#787878" opacity="0.4"/>
<circle cx="83.0" cy="295.0" r="0.45" fill="#9a9a9a" opacity="0.4"/>
<circle cx="224.2" cy="277.0" r="0.45" fill="#9a9a9a" opacity="0.4"/>
<circle cx="157.1" cy="247.8" r="0.45" fill="#9a9a9a" opacity="0.4"/>
<circle cx="167.4" cy="233.4" r="0.45" fill="#787878" opacity="0.4"/>
<circle cx="125.4" cy="304.4" r="0.45" fill="#787878" opacity="0.4"/>
<circle cx="203.5" cy="251.6" r="0.45" fill="#9a9a9a" opacity="0.4"/>
<circle cx="81.1" cy="225.9" r="0.45" fill="#9a9a9a" opacity="0.4"/>
<circle cx="111.3" cy="203.3" r="0.45" fill="#9a9a9a" opacity="0.4"/>
<circle cx="162.0" cy="237.5" r="0.45" fill="#9a9a9a" opacity="0.4"/>
<circle cx="160.4" cy="271.5" r="0.45" fill="#787878" opacity="0.4"/>
<circle cx="204.9" cy="201.0" r="0.45" fill="#9a9a9a" opacity="0.4"/>
<circle cx="221.6" cy="195.2" r="0.45" fill="#9a9a9a" opacity="0.4"/>
<circle cx="167.5" cy="274.8" r="0.45" fill="#9a9a9a" opacity="0.4"/>
<circle cx="101.3" cy="215.7" r="0.45" fill="#9a9a9a" opacity="0.4"/>
<circle cx="96.3" cy="314.2" r="0.45" fill="#787878" opacity="0.4"/>
<circle cx="73.6" cy="207.7" r="0.45" fill="#787878" opacity="0.4"/>
<circle cx="102.3" cy="290.8" r="0.45" fill="#787878" opacity="0.4"/>
<circle cx="191.7" cy="208.3" r="0.45" fill="#9a9a9a" opacity="0.4"/>
<circle cx="179.7" cy="263.4" r="0.45" fill="#787878" opacity="0.4"/>
<circle cx="175.0" cy="298.4" r="0.45" fill="#9a9a9a" opacity="0.4"/>
<circle cx="139.4" cy="205.6" r="0.45" fill="#787878" opacity="0.4"/>
<circle cx="81.3" cy="254.3" r="0.45" fill="#9a9a9a" opacity="0.4"/>
<circle cx="92.1" cy="222.5" r="0.45" fill="#787878" opacity="0.4"/>
<circle cx="113.3" cy="303.2" r="0.45" fill="#9a9a9a" opacity="0.4"/>
<circle cx="207.9" cy="223.2" r="0.45" fill="#787878" opacity="0.4"/>
<circle cx="198.3" cy="238.2" r="0.45" fill="#9a9a9a" opacity="0.4"/>
<circle cx="169.9" cy="214.5" r="0.45" fill="#9a9a9a" opacity="0.4"/>
<circle cx="140.0" cy="288.9" r="0.45" fill="#9a9a9a" opacity="0.4"/>
<circle cx="207.0" cy="299.4" r="0.45" fill="#9a9a9a" opacity="0.4"/>
<circle cx="156.6" cy="301.8" r="0.45" fill="#9a9a9a" opacity="0.4"/>
<circle cx="157.0" cy="246.9" r="0.45" fill="#9a9a9a" opacity="0.4"/>
<circle cx="116.0" cy="248.4" r="0.45" fill="#787878" opacity="0.4"/>
<circle cx="106.9" cy="244.5" r="0.45" fill="#9a9a9a" opacity="0.4"/>
<circle cx="105.3" cy="303.1" r="0.45" fill="#787878" opacity="0.4"/>
<circle cx="85.2" cy="252.2" r="0.45" fill="#787878" opacity="0.4"/>
<circle cx="74.2" cy="242.1" r="0.45" fill="#9a9a9a" opacity="0.4"/>
<circle cx="154.9" cy="300.7" r="0.45" fill="#9a9a9a" opacity="0.4"/>
<circle cx="83.9" cy="308.3" r="0.45" fill="#9a9a9a" opacity="0.4"/>
<circle cx="196.5" cy="216.4" r="0.45" fill="#787878" opacity="0.4"/>
<circle cx="197.7" cy="294.8" r="0.45" fill="#787878" opacity="0.4"/>
<circle cx="143.3" cy="280.3" r="0.45" fill="#787878" opacity="0.4"/>
<circle cx="82.0" cy="305.6" r="0.45" fill="#787878" opacity="0.4"/>
<circle cx="162.4" cy="202.6" r="0.45" fill="#787878" opacity="0.4"/>
<circle cx="119.3" cy="203.3" r="0.45" fill="#787878" opacity="0.4"/>
<circle cx="88.6" cy="300.2" r="0.45" fill="#787878" opacity="0.4"/>
<circle cx="168.5" cy="299.2" r="0.45" fill="#787878" opacity="0.4"/>
<circle cx="181.5" cy="241.9" r="0.45" fill="#787878" opacity="0.4"/>
<circle cx="123.6" cy="298.0" r="0.45" fill="#787878" opacity="0.4"/>
<circle cx="101.8" cy="285.3" r="0.45" fill="#787878" opacity="0.4"/>
<circle cx="192.0" cy="231.5" r="0.45" fill="#787878" opacity="0.4"/>
<circle cx="94.2" cy="226.3" r="0.45" fill="#9a9a9a" opacity="0.4"/>
<circle cx="146.4" cy="257.1" r="0.45" fill="#9a9a9a" opacity="0.4"/>
<circle cx="130.7" cy="312.3" r="0.45" fill="#787878" opacity="0.4"/>
<circle cx="176.5" cy="218.8" r="0.45" fill="#787878" opacity="0.4"/>
<circle cx="142.3" cy="275.5" r="0.45" fill="#787878" opacity="0.4"/>
<circle cx="194.0" cy="294.1" r="0.45" fill="#9a9a9a" opacity="0.4"/>
</svg></div>
<!-- mask -->
<div class="a" style="left:254px;top:188px;width:163px;height:129px;border:3px solid #fff;"></div>
<div class="a" style="left:257px;top:191px;width:156px;height:122px;border:solid #2e2e2e;border-width:4px 4px 3px 3px;background:#fff;"></div>
<div class="t" style="left:433.5px;top:243.5px;">High Pass Sharpening</div>

<!-- smart filters -->
<div class="a" style="left:132px;top:335px;width:156px;height:122px;border:solid #2e2e2e;border-width:3px 3px 2px 2px;background:#fff;"></div>
<div class="t" style="left:310px;top:380px;letter-spacing:0.12px;">Smart Filters</div>
<div class="t" style="left:168px;top:471.5px;letter-spacing:-0.2px;">High Pass</div>
<div class="a" style="left:61px;top:509px;width:677px;height:2px;background:#4a4a4a;"></div>
<div class="a" style="left:0;top:509px;width:59px;height:2px;background:#4a4a4a;"></div>

<!-- background layer -->
<div class="a" style="left:68px;top:518px;width:156px;height:122px;border:solid #333;border-width:3px 3px 2px 2px;background:#2a1e18;overflow:hidden;">
<svg width="156" height="122" viewBox="70 521 156 122" style="position:absolute;left:0;top:0;">
<defs>
<filter id="b2" x="-20%" y="-20%" width="140%" height="140%"><feGaussianBlur stdDeviation="2.5"/></filter>
<filter id="b1" x="-20%" y="-20%" width="140%" height="140%"><feGaussianBlur stdDeviation="0.6"/></filter>
<filter id="b3" x="-30%" y="-30%" width="160%" height="160%"><feGaussianBlur stdDeviation="1.6"/></filter>
<radialGradient id="iris" cx="0.5" cy="0.5" r="0.5"><stop offset="0.28" stop-color="#0e1414"/><stop offset="0.36" stop-color="#5a9aa0"/><stop offset="1" stop-color="#2e6070"/></radialGradient>
<radialGradient id="skin" cx="0.5" cy="0.4" r="0.62"><stop offset="0" stop-color="#d2ac96"/><stop offset="0.55" stop-color="#bc8c74"/><stop offset="1" stop-color="#80523e"/></radialGradient>
</defs>
<rect x="70" y="521" width="156" height="122" fill="#1c130e"/>
<g filter="url(#b3)">
<polygon points="214,521 230,521 230,645 190,645 205,615 214,585" fill="#2e2018"/>
<polygon points="212,600 222,578 226,640 196,640" fill="#5a3e2c"/>
<polygon points="66,600 84,600 104,645 66,645" fill="#120c0a"/>
<polygon points="80,610 96,640 84,645 72,630" fill="#3a2418"/>
</g>
<path d="M72,521 L219,521 L219,562 L213,585 L208,602 L195,628 L184,645 L115,645 L102,618 L89,596 L81,575 L72,560 Z" fill="url(#skin)" filter="url(#b1)"/>
<g filter="url(#b2)">
<ellipse cx="150" cy="526" rx="58" ry="8" fill="#d8b49c"/>
<ellipse cx="152" cy="540" rx="16" ry="8" fill="#d0a890"/>
<ellipse cx="114" cy="557" rx="18" ry="6" fill="#8e6250"/>
<ellipse cx="184" cy="556" rx="17" ry="6" fill="#986c58"/>
<ellipse cx="108" cy="592" rx="17" ry="12" fill="#b07866" opacity="0.5"/>
<ellipse cx="192" cy="592" rx="13" ry="12" fill="#b47e6e" opacity="0.5"/>
<path d="M147,552 L156,552 L162,592 L141,592 Z" fill="#d2ae98"/>
<ellipse cx="153" cy="641" rx="26" ry="5" fill="#c89e8c"/>
<ellipse cx="72" cy="548" rx="5" ry="30" fill="#1a120e"/>
<ellipse cx="78" cy="556" rx="4" ry="13" fill="#6a4434"/>
<ellipse cx="138" cy="580" rx="4" ry="12" fill="#946450" opacity="0.8"/>
<ellipse cx="163" cy="580" rx="4" ry="12" fill="#9c6c58" opacity="0.6"/>
<ellipse cx="150" cy="604" rx="14" ry="3.5" fill="#8a5a48" opacity="0.7"/>
<ellipse cx="210" cy="560" rx="6" ry="30" fill="#7a5040" opacity="0.7"/>
</g>
<g filter="url(#b3)">
<path d="M77,521 L91,521 L88,540 L86,576 L81,576 L78.5,550 Z" fill="#cdcac8" opacity="0.8"/>
<path d="M149.5,556 L152.5,556 L153,588 L150,588 Z" fill="#f4e8e0" opacity="0.7"/>
<circle cx="150" cy="591" r="2.6" fill="#f4eae4" opacity="0.7"/>
<ellipse cx="187" cy="571" rx="14" ry="6" fill="#e8d6cc" opacity="0.45"/>
<ellipse cx="164" cy="603" rx="7" ry="5" fill="#e4d0c6" opacity="0.4"/>
</g>
<circle cx="128.2" cy="577.0" r="0.37" fill="#f4eee8" opacity="0.81"/>
<circle cx="135.2" cy="521.5" r="0.58" fill="#f4eee8" opacity="0.42"/>
<circle cx="155.5" cy="590.5" r="0.60" fill="#f4eee8" opacity="0.43"/>
<circle cx="80.4" cy="533.1" r="0.63" fill="#f4eee8" opacity="0.87"/>
<circle cx="85.4" cy="523.7" r="0.45" fill="#f4eee8" opacity="0.68"/>
<circle cx="178.7" cy="563.2" r="0.40" fill="#f4eee8" opacity="0.55"/>
<circle cx="171.8" cy="572.6" r="0.43" fill="#f4eee8" opacity="0.45"/>
<circle cx="157.1" cy="526.6" r="0.57" fill="#f4eee8" opacity="0.67"/>
<circle cx="111.3" cy="597.1" r="0.51" fill="#f4eee8" opacity="0.52"/>
<circle cx="193.9" cy="565.4" r="0.61" fill="#f4eee8" opacity="0.66"/>
<circle cx="120.5" cy="572.9" r="0.79" fill="#f4eee8" opacity="0.46"/>
<circle cx="149.1" cy="592.9" r="0.77" fill="#f4eee8" opacity="0.61"/>
<circle cx="179.1" cy="526.2" r="0.74" fill="#f4eee8" opacity="0.56"/>
<circle cx="115.8" cy="584.0" r="0.56" fill="#f4eee8" opacity="0.82"/>
<circle cx="111.6" cy="587.2" r="0.38" fill="#f4eee8" opacity="0.75"/>
<circle cx="89.9" cy="565.4" r="0.48" fill="#f4eee8" opacity="0.59"/>
<circle cx="95.8" cy="579.5" r="0.43" fill="#f4eee8" opacity="0.46"/>
<circle cx="119.0" cy="523.6" r="0.68" fill="#f4eee8" opacity="0.60"/>
<circle cx="147.0" cy="595.3" r="0.60" fill="#f4eee8" opacity="0.84"/>
<circle cx="166.6" cy="591.4" r="0.54" fill="#f4eee8" opacity="0.58"/>
<circle cx="168.9" cy="588.5" r="0.43" fill="#f4eee8" opacity="0.52"/>
<circle cx="168.4" cy="578.3" r="0.43" fill="#f4eee8" opacity="0.54"/>
<circle cx="183.5" cy="568.1" r="0.60" fill="#f4eee8" opacity="0.88"/>
<circle cx="89.5" cy="556.4" r="0.68" fill="#f4eee8" opacity="0.63"/>
<circle cx="83.3" cy="542.5" r="0.40" fill="#f4eee8" opacity="0.72"/>
<circle cx="116.0" cy="529.9" r="0.55" fill="#f4eee8" opacity="0.45"/>
<circle cx="79.6" cy="521.0" r="0.42" fill="#f4eee8" opacity="0.45"/>
<circle cx="116.5" cy="564.7" r="0.44" fill="#f4eee8" opacity="0.59"/>
<circle cx="128.4" cy="584.9" r="0.56" fill="#f4eee8" opacity="0.46"/>
<circle cx="169.8" cy="595.7" r="0.57" fill="#f4eee8" opacity="0.44"/>
<circle cx="177.5" cy="527.7" r="0.57" fill="#f4eee8" opacity="0.75"/>
<circle cx="79.3" cy="572.4" r="0.59" fill="#f4eee8" opacity="0.47"/>
<circle cx="89.1" cy="561.9" r="0.48" fill="#f4eee8" opacity="0.72"/>
<circle cx="171.6" cy="523.4" r="0.52" fill="#f4eee8" opacity="0.48"/>
<circle cx="187.7" cy="577.1" r="0.50" fill="#f4eee8" opacity="0.51"/>
<circle cx="197.8" cy="578.0" r="0.68" fill="#f4eee8" opacity="0.51"/>
<circle cx="84.4" cy="560.5" r="0.80" fill="#f4eee8" opacity="0.80"/>
<circle cx="151.5" cy="600.9" r="0.78" fill="#f4eee8" opacity="0.62"/>
<circle cx="128.4" cy="575.9" r="0.45" fill="#f4eee8" opacity="0.51"/>
<circle cx="180.5" cy="570.6" r="0.79" fill="#f4eee8" opacity="0.71"/>
<circle cx="147.7" cy="526.9" r="0.71" fill="#f4eee8" opacity="0.44"/>
<circle cx="195.1" cy="528.0" r="0.69" fill="#f4eee8" opacity="0.64"/>
<circle cx="184.1" cy="574.0" r="0.39" fill="#f4eee8" opacity="0.87"/>
<circle cx="156.6" cy="602.1" r="0.39" fill="#f4eee8" opacity="0.48"/>
<circle cx="169.0" cy="573.0" r="0.56" fill="#f4eee8" opacity="0.73"/>
<circle cx="88.1" cy="573.9" r="0.65" fill="#f4eee8" opacity="0.58"/>
<circle cx="85.0" cy="522.2" r="0.71" fill="#f4eee8" opacity="0.76"/>
<circle cx="152.9" cy="529.4" r="0.55" fill="#f4eee8" opacity="0.84"/>
<circle cx="169.0" cy="564.7" r="0.58" fill="#f4eee8" opacity="0.78"/>
<circle cx="104.1" cy="577.9" r="0.41" fill="#f4eee8" opacity="0.86"/>
<circle cx="126.4" cy="587.2" r="0.72" fill="#f4eee8" opacity="0.66"/>
<circle cx="80.4" cy="529.2" r="0.58" fill="#f4eee8" opacity="0.84"/>
<circle cx="190.5" cy="577.1" r="0.42" fill="#f4eee8" opacity="0.47"/>
<circle cx="87.0" cy="551.0" r="0.50" fill="#f4eee8" opacity="0.66"/>
<circle cx="84.3" cy="562.9" r="0.75" fill="#f4eee8" opacity="0.43"/>
<circle cx="178.2" cy="577.0" r="0.58" fill="#f4eee8" opacity="0.68"/>
<circle cx="143.8" cy="526.5" r="0.58" fill="#f4eee8" opacity="0.66"/>
<circle cx="110.8" cy="582.3" r="0.57" fill="#f4eee8" opacity="0.87"/>
<circle cx="88.6" cy="571.9" r="0.47" fill="#f4eee8" opacity="0.68"/>
<circle cx="199.1" cy="563.0" r="0.40" fill="#f4eee8" opacity="0.62"/>
<circle cx="168.8" cy="524.9" r="0.45" fill="#f4eee8" opacity="0.55"/>
<circle cx="193.7" cy="522.4" r="0.67" fill="#f4eee8" opacity="0.73"/>
<circle cx="177.4" cy="563.0" r="0.56" fill="#f4eee8" opacity="0.77"/>
<circle cx="138.8" cy="525.4" r="0.80" fill="#f4eee8" opacity="0.82"/>
<circle cx="194.1" cy="581.9" r="0.53" fill="#f4eee8" opacity="0.61"/>
<circle cx="106.1" cy="589.4" r="0.36" fill="#f4eee8" opacity="0.68"/>
<circle cx="162.6" cy="593.8" r="0.58" fill="#f4eee8" opacity="0.55"/>
<circle cx="107.4" cy="529.3" r="0.45" fill="#f4eee8" opacity="0.84"/>
<circle cx="124.2" cy="521.4" r="0.70" fill="#f4eee8" opacity="0.54"/>
<circle cx="198.3" cy="578.7" r="0.65" fill="#f4eee8" opacity="0.87"/>
<g filter="url(#b1)">
<path d="M89,532 Q112,526 137,540 L136.5,542.5 Q112,533 89.5,535.5 Z" fill="#3a2a22"/>
<path d="M163,541 Q184,529 199,527 Q206,527 210,531 L209,533.5 Q190,532 164,543.5 Z" fill="#3a2a22"/>
<path d="M100,551 Q115,545 129,553 Q115,557 100,551 Z" fill="#b8ccd4"/>
<path d="M168,553 Q184,546 200,549 Q186,556 168,553 Z" fill="#b8ccd4"/>
<path d="M98,551.5 Q114,543 131,552.5" fill="none" stroke="#221814" stroke-width="1.7"/>
<path d="M166,553 Q184,543 202,548.5" fill="none" stroke="#221814" stroke-width="1.7"/>
<path d="M100,553.5 Q115,558 129,554" fill="none" stroke="#a87268" stroke-width="0.9"/>
<path d="M169,554.5 Q185,558.5 200,550.5" fill="none" stroke="#a87268" stroke-width="0.9"/>
</g>
<circle cx="115" cy="550.6" r="5" fill="url(#iris)" filter="url(#b1)"/>
<circle cx="182.7" cy="550.4" r="5" fill="url(#iris)" filter="url(#b1)"/>
<g filter="url(#b1)">
<path d="M124,620 Q134,611 148,611 Q164,609 176,619.5 Q150,621.5 124,620 Z" fill="#a86a68"/>
<path d="M125,620.8 Q150,622.5 175,620.3 Q170,636 150,636.5 Q132,636 125,620.8 Z" fill="#cc9490"/>
<path d="M124,620.2 Q150,622.8 176,619.8" fill="none" stroke="#4a2c28" stroke-width="1"/>
<ellipse cx="152" cy="627" rx="14" ry="3" fill="#e8c4c0" opacity="0.5"/>
</g>
</svg></div>
<div class="t" style="left:244.5px;top:568.5px;letter-spacing:0.25px;">Background</div>


<svg width="768" height="652" viewBox="0 0 768 652">
<!-- hamburger -->
<g fill="#bababa"><rect x="738" y="16" width="20" height="2"/><rect x="738" y="20" width="20" height="2"/><rect x="738" y="24" width="20" height="2"/><rect x="738" y="28" width="20" height="2"/></g>
<!-- chevrons -->
<g fill="none" stroke="#e8e8e8" stroke-width="2.2">
<polyline points="255.5,88.5 262.5,95.5 269.5,88.5"/>
<polyline points="480.5,88.5 487.5,95.5 494.5,88.5"/>
<polyline points="480.5,148.5 487.5,155.5 494.5,148.5"/>
<polyline points="721,259.2 727,253.2 733,259.2"/>
</g>
<!-- checkerboard -->
<rect x="82" y="137" width="26" height="26" fill="#9a9a9a"/>
<g fill="#575757"><rect x="84.5" y="139.5" width="7" height="7"/><rect x="98.5" y="139.5" width="7" height="7"/><rect x="91.5" y="146.5" width="7" height="7"/><rect x="84.5" y="153.5" width="7" height="7"/><rect x="98.5" y="153.5" width="7" height="7"/></g>
<!-- brush -->
<g fill="#8e8e8e">
<path d="M153.2,134.9 C154.8,133.9 156.6,134.8 155.7,136.8 Q151,147.5 143.3,155.0 L137.8,150.4 Q146,140.5 153.2,134.9 Z"/>
<path d="M136.5,151.8 L142.3,156.6 C143.5,160.5 141,164.8 135,166 C131,166.8 128,166.6 125.2,166.5 C127.3,164 127.4,160.5 129.2,157 C131,153.5 133.5,152 136.5,151.8 Z"/>
</g>
<!-- move -->
<g fill="#e0e0e0">
<rect x="180.7" y="140" width="2.6" height="20"/><rect x="172" y="148.7" width="20" height="2.6"/>
<polygon points="182,134.7 188,141.7 176,141.7"/>
<polygon points="182,165.3 188,158.3 176,158.3"/>
<polygon points="166.7,150 173.7,144 173.7,156"/>
<polygon points="197.3,150 190.3,144 190.3,156"/>
</g>
<!-- artboard -->
<g fill="#e0e0e0">
<path d="M215.5,139 L231.3,139 L238.5,146.2 L238.5,158.5 L215.5,158.5 Z M217.7,141.2 L217.7,156.3 L236.3,156.3 L236.3,149.2 L232,149.2 Q229.4,149.2 229.4,146.6 L229.4,141.2 Z" fill-rule="evenodd"/>
<rect x="215.2" y="135" width="2.6" height="2.6"/><rect x="236.2" y="135" width="2.6" height="2.6"/>
<rect x="210.8" y="139.4" width="3.4" height="2.6"/><rect x="239.8" y="139.4" width="3.4" height="2.6"/>
<rect x="210.8" y="156.6" width="3.4" height="2.6"/><rect x="239.8" y="156.6" width="3.4" height="2.6"/>
<rect x="215.2" y="161.2" width="2.6" height="2.6"/><rect x="236.2" y="161.2" width="2.6" height="2.6"/>
</g>
<!-- lock solid -->
<path d="M264.9,144.5 L264.9,143.1 A6.1,6.1 0 0 1 277.1,143.1 L277.1,144.5" fill="none" stroke="#e0e0e0" stroke-width="2.4"/>
<rect x="259.2" y="143.8" width="23.8" height="19.3" rx="2" fill="#e0e0e0"/>
<circle cx="271" cy="152.8" r="3.4" fill="#535353"/>
<!-- eyes -->
<path d="M17.8,256.4 C24.0,246.4 37.0,246.4 43.2,256.4 C37.0,266.4 24.0,266.4 17.8,256.4 Z" fill="#dcdcdc"/><circle cx="30.5" cy="256.4" r="5.3" fill="#535353"/><rect x="31.3" y="253.6" width="2.2" height="2.2" fill="#dcdcdc"/>
<path d="M99.9,396.6 C106.1,386.6 119.1,386.6 125.3,396.6 C119.1,406.6 106.1,406.6 99.9,396.6 Z" fill="#dcdcdc"/><circle cx="112.6" cy="396.6" r="5.3" fill="#535353"/><rect x="113.4" y="393.8" width="2.2" height="2.2" fill="#dcdcdc"/>
<path d="M133.6,487.6 C139.8,477.6 152.8,477.6 159.0,487.6 C152.8,497.6 139.8,497.6 133.6,487.6 Z" fill="#dcdcdc"/><circle cx="146.3" cy="487.6" r="5.3" fill="#535353"/><rect x="147.1" y="484.8" width="2.2" height="2.2" fill="#dcdcdc"/>
<path d="M17.8,582.5 C24.0,572.5 37.0,572.5 43.2,582.5 C37.0,592.5 24.0,592.5 17.8,582.5 Z" fill="#dcdcdc"/><circle cx="30.5" cy="582.5" r="5.3" fill="#535353"/><rect x="31.3" y="579.7" width="2.2" height="2.2" fill="#dcdcdc"/>
<!-- chain -->
<g fill="none" stroke="#e6e6e6" stroke-width="2.2">
<path d="M238.8,253.4 A6.4,6.4 0 1 1 246,253.4"/>
<path d="M238.8,257.2 A6.4,6.4 0 1 0 246,257.2"/>
</g>
<rect x="241.2" y="248.8" width="2.8" height="13.4" rx="1.2" fill="#e6e6e6"/>
<!-- smart object badge -->
<rect x="197.2" y="288" width="30" height="30" fill="#333"/>
<rect x="199.2" y="290" width="27" height="27" fill="#6c6c6c"/>
<g fill="#e4e4e4">
<path d="M206,293 L213.8,293 L213.8,300.9 L222,300.9 L222,313.7 L214.1,313.7 L214.1,310.2 L217.9,310.2 L217.9,303.1 L206,303.6 Z"/>
<polygon points="215.9,293.3 221.7,298.9 215.9,298.9"/>
<rect x="201.9" y="306.1" width="9.9" height="9.7"/>
</g>
<!-- two circles -->
<circle cx="693.5" cy="259" r="7.6" fill="none" stroke="#a8a8a8" stroke-width="1.8"/>
<circle cx="700.7" cy="253.8" r="7" fill="#6b6b6b" opacity="0.55"/>
<circle cx="700.7" cy="253.8" r="7.6" fill="none" stroke="#ececec" stroke-width="1.8"/>
<!-- filter options -->
<g fill="#e4e4e4">
<rect x="691" y="480" width="24.2" height="2.2"/><rect x="691" y="490" width="24.2" height="2.2"/>
<polygon points="700,482.7 704.7,488 695.3,488"/>
<polygon points="709,492.8 713.9,498 704.2,498"/>
</g>
<!-- lock outline -->
<path d="M688.4,578 L688.4,576.4 A5.6,5.6 0 0 1 699.6,576.4 L699.6,578" fill="none" stroke="#e4e4e4" stroke-width="2"/>
<rect x="685.1" y="578.2" width="18" height="13.6" rx="1.5" fill="none" stroke="#e4e4e4" stroke-width="2"/>
<circle cx="694" cy="585.3" r="2.6" fill="#e4e4e4"/>
</svg>
<div class="a" style="left:767px;top:0;width:1px;height:652px;background:rgba(255,255,255,0.05);"></div>
</body></html>
